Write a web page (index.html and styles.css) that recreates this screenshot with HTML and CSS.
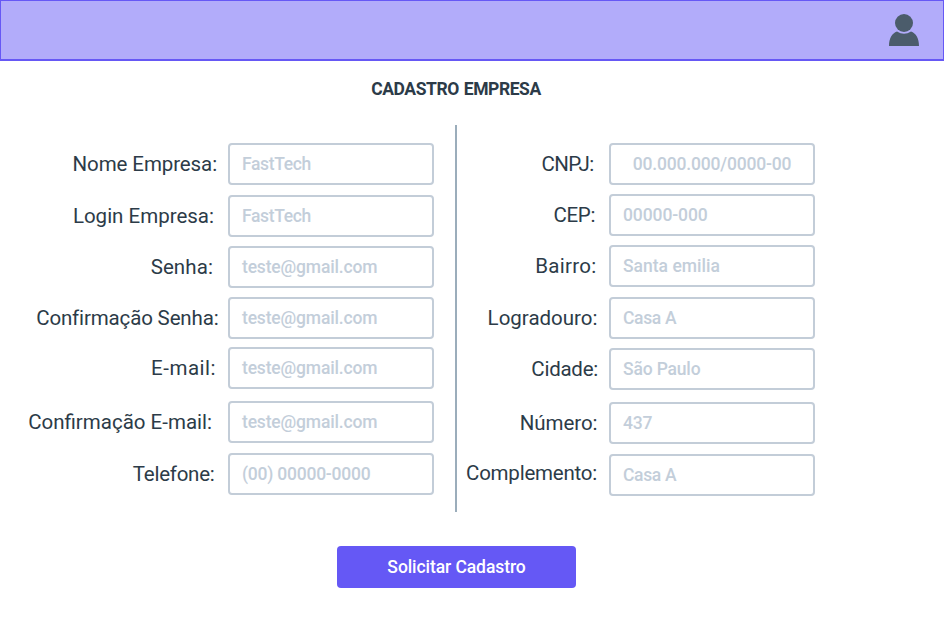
FILE: index.html
```
<!DOCTYPE html>
<html lang="pt-BR">
<head>
<meta charset="utf-8">
<title>Cadastro Empresa</title>
<link rel="stylesheet" href="styles.css">
</head>
<body>
<header class="topbar">
  <svg class="avatar" viewBox="0 0 30 32" width="30" height="32"><circle cx="15" cy="9" r="9"/><path d="M0 32C0 24 3 19.500 8 17.500Q15 22 22 17.500C27 19.500 30 24 30 32Z"/></svg>
</header>
<main class="page">
  <h1 class="title">CADASTRO EMPRESA</h1>
  <form class="form">
    <section class="column left">
      <div class="row company"><label class="label">Nome Empresa:</label><div class="field name">FastTech</div></div>
      <div class="row login"><label class="label">Login Empresa:</label><div class="field name">FastTech</div></div>
      <div class="row password"><label class="label">Senha:</label><div class="field">teste@gmail.com</div></div>
      <div class="row password-confirm"><label class="label">Confirmação Senha:</label><div class="field">teste@gmail.com</div></div>
      <div class="row email"><label class="label">E-mail:</label><div class="field">teste@gmail.com</div></div>
      <div class="row email-confirm"><label class="label">Confirmação E-mail:</label><div class="field">teste@gmail.com</div></div>
      <div class="row phone"><label class="label">Telefone:</label><div class="field">(00) 00000-0000</div></div>
    </section>
    <div class="divider"></div>
    <section class="column right">
      <div class="row cnpj"><label class="label">CNPJ:</label><div class="field centered">00.000.000/0000-00</div></div>
      <div class="row cep"><label class="label">CEP:</label><div class="field">00000-000</div></div>
      <div class="row district"><label class="label">Bairro:</label><div class="field">Santa emilia</div></div>
      <div class="row street"><label class="label">Logradouro:</label><div class="field">Casa A</div></div>
      <div class="row city"><label class="label">Cidade:</label><div class="field">São Paulo</div></div>
      <div class="row number"><label class="label">Número:</label><div class="field">437</div></div>
      <div class="row extra"><label class="label">Complemento:</label><div class="field">Casa A</div></div>
    </section>
  </form>
  <button class="submit" type="button">Solicitar Cadastro</button>
</main>
</body>
</html>
```
FILE: styles.css
```
* { box-sizing: border-box; }
body { margin: 0; width: 944px; height: 620px; overflow: hidden; background: #fff; color: #2c3b48; font-family: Roboto, sans-serif; }
.topbar { height: 61px; display: flex; justify-content: flex-end; padding: 12px 24px 0 0; background: #b2acfa; border: 1px solid #6658f5; border-bottom-width: 2px; }
.avatar { margin-top: 1px; fill: #4b5c6b; }
.page { display: flex; flex-direction: column; width: 912px; }
.title { margin: 16px 0 0; height: 24px; line-height: 24px; font-size: 17.5px; font-weight: 700; text-align: center; letter-spacing: -0.43px; word-spacing: 1px; }
.form { display: flex; height: 387px; margin-top: 24px; }
.column { display: flex; flex-direction: column; padding-top: 18px; }
.left { width: 455px; }
.divider { width: 2px; background: #9badbb; }
.row { display: flex; height: 42px; margin-bottom: 9px; flex: none; }
.label { width: 228px; padding-right: 10.5px; line-height: 42px; font-size: 20.5px; text-align: right; white-space: nowrap; }
.right .label { width: 152px; }
.field { width: 206px; border: 2px solid #c3cdd8; border-radius: 4px; padding-left: 12px; line-height: 38px; font-size: 17.5px; font-weight: 500; color: #c3ceda; white-space: nowrap; letter-spacing: -0.17px; }
.centered { padding: 0; text-align: center; }
.name { letter-spacing: -0.35px; }

/* Row rhythm */
.company, .district, .email-confirm, .number { margin-bottom: 10px; }
.password-confirm { margin-bottom: 8px; }
.email, .city { margin-bottom: 12px; }

/* Label fitting */
.company .label { letter-spacing: -0.1px; padding-right: 11px; }
.login .label { letter-spacing: 0; padding-right: 14px; }
.password .label { letter-spacing: 0.1px; padding-right: 15px; }
.password-confirm .label { letter-spacing: -0.15px; padding-right: 9.5px; }
.email .label { letter-spacing: 0.5px; padding-right: 12px; }
.email-confirm .label { letter-spacing: 0; padding-right: 16px; }
.phone .label { letter-spacing: -0.25px; padding-right: 13.5px; }
.cnpj .label { letter-spacing: -0.65px; padding-right: 15.5px; }
.cep .label { letter-spacing: -0.35px; padding-right: 14px; }
.district .label { letter-spacing: 0.3px; padding-right: 12.5px; }
.street .label { letter-spacing: 0; padding-right: 11.5px; }
.city .label { letter-spacing: -0.25px; padding-right: 11px; }
.number .label { letter-spacing: -0.05px; padding-right: 11.5px; }
.extra .label { letter-spacing: -0.23px; padding-right: 12px; line-height: 38px; }

/* Field fitting */
.phone .field { letter-spacing: -0.23px; }
.cep .field { letter-spacing: -0.1px; }
.district .field { letter-spacing: 0; }
.street .field, .extra .field { letter-spacing: -0.35px; }

.submit { width: 239px; height: 42px; margin: 34px 0 0 337px; padding: 0; border: 0; border-radius: 4px; background: #6558f5; color: #fff; font: 500 17.5px/42px Roboto, sans-serif; letter-spacing: -0.08px; }
```
